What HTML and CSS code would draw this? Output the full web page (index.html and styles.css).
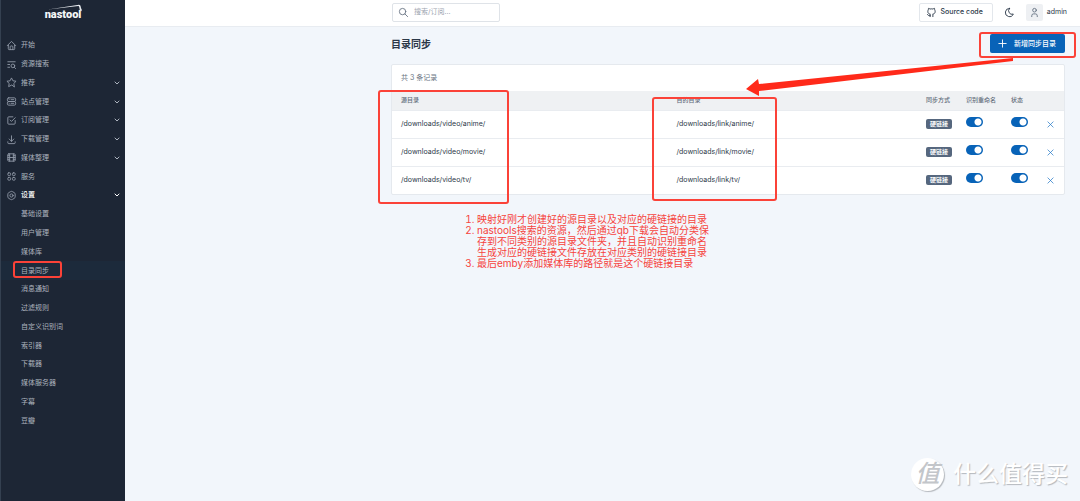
FILE: index.html
```html
<!DOCTYPE html>
<html lang="zh-CN">
<head>
<meta charset="utf-8">
<meta name="viewport" content="width=device-width, initial-scale=1">
<title>目录同步 - nastool</title>
<link rel="stylesheet" href="styles.css">
</head>
<body>
<div class="page">
  <aside class="sidebar">
    <a class="logo" href="#">
      <span>nastool</span>
      <svg class="logo-line" viewBox="0 0 40 10" aria-hidden="true"><path d="M5 5.500 36 .8c2 0 1.500 3.200 3 5.200l-1 1.400c-2-.8-1-4.800-2.600-5.400z"/></svg>
    </a>
    <nav class="nav">
      <ul class="menu">
        <li><a href="#"><svg class="icon" viewBox="0 0 24 24"><path d="M5 12H3l9-9 9 9h-2M5 12v7a2 2 0 0 0 2 2h10a2 2 0 0 0 2-2v-7M9 21v-6a2 2 0 0 1 2-2h2a2 2 0 0 1 2 2v6"/></svg><span>开始</span></a></li>
        <li><a href="#"><svg class="icon" viewBox="0 0 24 24"><circle cx="15" cy="15" r="4"/><path d="m18.500 18.500 2.500 2.500M4 6h16M4 12h4M4 18h4"/></svg><span>资源搜索</span></a></li>
        <li><a href="#"><svg class="icon" viewBox="0 0 24 24"><path d="m12 17.750-6.172 3.245 1.179-6.873-5-4.867 6.900-1L12 2l3.086 6.253 6.900 1-5 4.867 1.179 6.873z"/></svg><span>推荐</span><svg class="chevron" viewBox="0 0 24 24"><path d="m6 9 6 6 6-6"/></svg></a></li>
        <li><a href="#"><svg class="icon" viewBox="0 0 24 24"><rect x="3" y="4" width="18" height="8" rx="3"/><rect x="3" y="12" width="18" height="8" rx="3"/><path d="M7 8v.01M7 16v.01M11 8h6M11 16h6"/></svg><span>站点管理</span><svg class="chevron" viewBox="0 0 24 24"><path d="m6 9 6 6 6-6"/></svg></a></li>
        <li><a href="#"><svg class="icon" viewBox="0 0 24 24"><path d="m9 11 3 3 8-8M20 12v6a2 2 0 0 1-2 2H6a2 2 0 0 1-2-2V6a2 2 0 0 1 2-2h9"/></svg><span>订阅管理</span><svg class="chevron" viewBox="0 0 24 24"><path d="m6 9 6 6 6-6"/></svg></a></li>
        <li><a href="#"><svg class="icon" viewBox="0 0 24 24"><path d="M4 17v2a2 2 0 0 0 2 2h12a2 2 0 0 0 2-2v-2M7 11l5 5 5-5M12 4v12"/></svg><span>下载管理</span><svg class="chevron" viewBox="0 0 24 24"><path d="m6 9 6 6 6-6"/></svg></a></li>
        <li><a href="#"><svg class="icon" viewBox="0 0 24 24"><rect x="4" y="4" width="16" height="16" rx="2"/><path d="M8 4v16M16 4v16M4 8h4M4 16h4M4 12h16M16 8h4M16 16h4"/></svg><span>媒体整理</span><svg class="chevron" viewBox="0 0 24 24"><path d="m6 9 6 6 6-6"/></svg></a></li>
        <li><a href="#"><svg class="icon" viewBox="0 0 24 24"><rect x="4" y="4" width="6" height="6" rx="2"/><rect x="14" y="4" width="6" height="6" rx="2"/><rect x="4" y="14" width="6" height="6" rx="2"/><rect x="14" y="14" width="6" height="6" rx="2"/></svg><span>服务</span></a></li>
        <li class="open"><a href="#"><svg class="icon" viewBox="0 0 24 24"><path d="M10 3.500c1.200-.8 2.800-.8 4 0l4 2.300c1.300.7 2 1.700 2 3.200v6c0 1.500-.7 2.500-2 3.200l-4 2.300c-1.200.8-2.800.8-4 0l-4-2.300c-1.300-.7-2-1.700-2-3.200V9c0-1.500.7-2.500 2-3.200z"/><circle cx="12" cy="12" r="3.500"/></svg><span>设置</span><svg class="chevron" viewBox="0 0 24 24"><path d="m6 9 6 6 6-6"/></svg></a></li>
      </ul>
      <ul class="menu submenu">
        <li><a href="#">基础设置</a></li>
        <li><a href="#">用户管理</a></li>
        <li><a href="#">媒体库</a></li>
        <li class="current"><a href="#" aria-current="page">目录同步</a><span class="mark mark-nav"></span></li>
        <li><a href="#">消息通知</a></li>
        <li><a href="#">过滤规则</a></li>
        <li><a href="#">自定义识别词</a></li>
        <li><a href="#">索引器</a></li>
        <li><a href="#">下载器</a></li>
        <li><a href="#">媒体服务器</a></li>
        <li><a href="#">字幕</a></li>
        <li><a href="#">豆瓣</a></li>
      </ul>
    </nav>
  </aside>

  <div class="main">
    <header class="topbar">
      <label class="search">
        <svg class="icon" viewBox="0 0 24 24"><circle cx="10" cy="10" r="7"/><path d="m21 21-6-6"/></svg>
        <input type="search" placeholder="搜索/订阅..." aria-label="搜索/订阅">
      </label>
      <div class="tools">
        <a class="source" href="#"><svg class="icon" viewBox="0 0 24 24"><path d="M9 19c-4.300 1.400-4.300-2.500-6-3m12 5v-3.500c0-1 .1-1.400-.5-2 2.800-.3 5.500-1.400 5.500-6a4.600 4.600 0 0 0-1.300-3.200 4.200 4.200 0 0 0-.1-3.200s-1.100-.3-3.500 1.300a12.300 12.300 0 0 0-6.200 0C6.500 2.800 5.400 3.100 5.400 3.100a4.200 4.200 0 0 0-.1 3.200A4.600 4.600 0 0 0 4 9.500c0 4.600 2.700 5.700 5.500 6-.6.6-.6 1.200-.5 2V21"/></svg><span>Source code</span></a>
        <button class="theme" type="button" aria-label="深色模式"><svg class="icon" viewBox="0 0 24 24"><path d="M12 3h.4a7.500 7.500 0 0 0 7.900 12.400A9 9 0 1 1 12 3z"/></svg></button>
        <a class="user" href="#"><span class="avatar"><svg class="icon" viewBox="0 0 24 24"><circle cx="12" cy="7" r="4"/><path d="M6 21v-2a4 4 0 0 1 4-4h4a4 4 0 0 1 4 4v2"/></svg></span><span>admin</span></a>
      </div>
    </header>

    <main class="content">
      <div class="heading">
        <h1>目录同步</h1>
        <button class="add" type="button"><svg class="icon" viewBox="0 0 24 24"><path d="M12 4v16M4 12h16"/></svg><span>新增同步目录</span></button>
      </div>
      <section class="card">
        <p class="count">共 3 条记录</p>
        <table class="list">
          <colgroup><col class="c-source"><col><col class="c-mode"><col class="c-rename"><col class="c-state"><col class="c-remove"></colgroup>
          <thead>
            <tr><th>源目录</th><th>目的目录</th><th>同步方式</th><th>识别重命名</th><th>状态</th><th></th></tr>
          </thead>
          <tbody>
            <tr>
              <td>/downloads/video/anime/</td><td>/downloads/link/anime/</td><td><span class="badge">硬链接</span></td>
              <td><input class="switch" type="checkbox" checked aria-label="识别重命名"></td>
              <td><input class="switch" type="checkbox" checked aria-label="状态"></td>
              <td><button class="remove" type="button" aria-label="删除"><svg class="icon" viewBox="0 0 24 24"><path d="M5 5l14 14M19 5 5 19"/></svg></button></td>
            </tr>
            <tr>
              <td>/downloads/video/movie/</td><td>/downloads/link/movie/</td><td><span class="badge">硬链接</span></td>
              <td><input class="switch" type="checkbox" checked aria-label="识别重命名"></td>
              <td><input class="switch" type="checkbox" checked aria-label="状态"></td>
              <td><button class="remove" type="button" aria-label="删除"><svg class="icon" viewBox="0 0 24 24"><path d="M5 5l14 14M19 5 5 19"/></svg></button></td>
            </tr>
            <tr>
              <td>/downloads/video/tv/</td><td>/downloads/link/tv/</td><td><span class="badge">硬链接</span></td>
              <td><input class="switch" type="checkbox" checked aria-label="识别重命名"></td>
              <td><input class="switch" type="checkbox" checked aria-label="状态"></td>
              <td><button class="remove" type="button" aria-label="删除"><svg class="icon" viewBox="0 0 24 24"><path d="M5 5l14 14M19 5 5 19"/></svg></button></td>
            </tr>
          </tbody>
        </table>
      </section>
      <ol class="notes">
        <li>映射好刚才创建好的源目录以及对应的硬链接的目录</li>
        <li>nastools搜索的资源，然后通过qb下载会自动分类保<br>存到不同类别的源目录文件夹，并且自动识别重命名<br>生成对应的硬链接文件存放在对应类别的硬链接目录</li>
        <li>最后emby添加媒体库的路径就是这个硬链接目录</li>
      </ol>
    </main>
  </div>

  <span class="mark mark-source"></span>
  <span class="mark mark-target"></span>
  <span class="mark mark-add"></span>
  <svg class="arrow" viewBox="0 0 270 40" aria-hidden="true"><path d="M1 32 13 22 14 27 268 1v3L14 34l0 5z"/></svg>
  <div class="watermark"><span class="seal">值</span><span>什么值得买</span></div>
</div>
</body>
</html>
```
FILE: styles.css
```css
* { box-sizing: border-box; }

body {
  margin: 0;
  background: #f2f6fb;
  color: #2b3848;
  font: 7px/10px Inter, "Noto Sans CJK SC", sans-serif;
}

a { color: inherit; text-decoration: none; }
button, input { font: inherit; color: inherit; }
button { border: 0; padding: 0; background: none; }
ul, ol { margin: 0; padding: 0; list-style: none; }

.icon, .chevron {
  flex: none;
  width: 11px;
  height: 11px;
  fill: none;
  stroke: currentColor;
  stroke-width: 2;
  stroke-linecap: round;
  stroke-linejoin: round;
}

.page { position: relative; display: flex; min-height: 100vh; overflow: hidden; }

/* Sidebar */
.sidebar {
  flex: none;
  width: 125px;
  background: #1d2635;
  border-left: 1px solid #344050;
  color: #adb4bf;
}
.logo {
  position: relative;
  display: block;
  height: 36px;
  padding-top: 8px;
  text-align: center;
  color: #f4f6f8;
  font: 900 11px/14px Roboto, sans-serif;
}
.logo-line { position: absolute; left: 42px; top: 4px; width: 40px; height: 10px; fill: #e4e7eb; }
.nav { display: flex; flex-direction: column; height: 394px; }
.menu { flex: 9; display: grid; grid-auto-rows: 1fr; }
.menu a { display: flex; align-items: center; gap: 4px; height: 100%; padding: 0 4px 0 5px; }
.menu .icon { color: #8f98a6; }
.chevron { width: 8px; height: 8px; margin-left: auto; stroke-width: 3; }
.open { color: #fff; font-weight: 500; }
.submenu { flex: 12; }
.submenu a { padding-left: 20px; }
.current { position: relative; background: #1c2a3b; }

/* Top bar */
.main { flex: 1; min-width: 0; }
.topbar {
  display: flex;
  align-items: center;
  justify-content: space-between;
  height: 27px;
  padding: 0 13px 2px 267px;
  background: #fff;
  border-bottom: 1px solid #e8ecf1;
}
.search {
  display: flex;
  align-items: center;
  gap: 5px;
  width: 108px;
  height: 19px;
  padding: 0 5px;
  border: 1px solid #dfe3e8;
  border-radius: 2px;
  color: #6b7685;
}
.search input { width: 100%; border: 0; padding: 0; outline: 0; background: none; }
.search input::placeholder { color: #9da5b0; opacity: 1; }
.tools { display: flex; align-items: center; gap: 11px; }
.source {
  display: flex;
  align-items: center;
  gap: 4px;
  height: 19px;
  padding: 0 9px 0 6px;
  border: 1px solid #e3e7ec;
  border-radius: 2px;
  font-weight: 500;
}
.theme { display: flex; }
.user { display: flex; align-items: center; gap: 4px; }
.avatar { display: flex; padding: 3px; border-radius: 2px; background: #eef0f3; color: #667382; }

/* Content */
.content { padding: 7px 15px 0 266px; }
.heading { display: flex; align-items: center; justify-content: space-between; }
h1 { margin: 0; font-size: 10px; line-height: 14px; font-weight: 600; }
.add {
  display: flex;
  align-items: center;
  gap: 6px;
  height: 19px;
  padding: 0 9px 0 7px;
  border-radius: 2px;
  background: #0863b8;
  color: #fff;
  font-weight: 500;
}
.card {
  margin-top: 11px;
  border: 1px solid #e5e9ee;
  border-radius: 2px;
  background: #fff;
}
.count { margin: 0; padding: 8px 9px; color: #6a7583; }
.list { width: 100%; border-collapse: collapse; table-layout: fixed; }
.c-source { width: 41%; }
.c-mode { width: 40px; }
.c-rename { width: 45px; }
.c-state { width: 35px; }
.c-remove { width: 27px; }
th {
  height: 19px;
  padding: 0 0 0 9px;
  background: #eff1f3;
  color: #5f6b7a;
  font-size: 6px;
  font-weight: 500;
  text-align: left;
  white-space: nowrap;
}
td { height: 28px; padding: 0 0 0 9px; border-top: 1px solid #e9ecf0; }
.badge {
  display: inline-block;
  padding: 0 4px;
  border-radius: 2px;
  background: #56677e;
  color: #fff;
  font-size: 6px;
  font-weight: 700;
  vertical-align: middle;
}
.switch {
  appearance: none;
  display: block;
  width: 17px;
  height: 10px;
  margin: 0 0 4px;
  border-radius: 5px;
  background: radial-gradient(circle at 12px 5px, #fff 3px, #0863b8 4px);
}
.remove { display: flex; color: #2b7cc8; }
.remove .icon { width: 9px; height: 9px; }

/* Annotations */
.notes {
  margin: 19px 0 0 86px;
  color: #f6433d;
  font-size: 10px;
  line-height: 11px;
  list-style: decimal;
  white-space: nowrap;
}
.mark { position: absolute; border: 2px solid #fb4238; border-radius: 3px; pointer-events: none; }
.mark-nav { left: 12px; top: 0; width: 49px; height: 17px; }
.mark-source { left: 378px; top: 90px; width: 131px; height: 114px; }
.mark-target { left: 652px; top: 97px; width: 125px; height: 104px; }
.mark-add { right: 4px; top: 32px; width: 97px; height: 26px; }
.arrow { position: absolute; left: 745px; top: 57px; width: 270px; height: 40px; fill: #ff2a1a; }
.watermark {
  position: absolute;
  right: 12px;
  bottom: 10px;
  display: flex;
  align-items: center;
  gap: 9px;
  color: #fff;
  font-size: 23px;
  font-weight: 500;
  line-height: 34px;
  text-shadow: 1px 1px 1px #b4b8bd;
}
.seal {
  width: 33px;
  height: 33px;
  border-radius: 50%;
  background: #fff;
  box-shadow: 1px 1px 1px #b4b8bd;
  color: #c3c6ca;
  font-size: 24px;
  font-style: italic;
  line-height: 32px;
  text-align: center;
  text-shadow: none;
}
```
